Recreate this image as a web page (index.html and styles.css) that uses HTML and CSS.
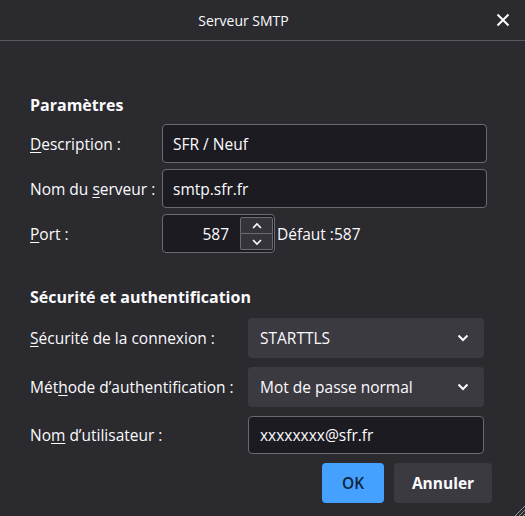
FILE: index.html
```html
<!DOCTYPE html>
<html lang="fr">
<head>
<meta charset="utf-8">
<title>Serveur SMTP</title>
<link rel="stylesheet" href="styles.css">
</head>
<body>
<div class="dialog">
  <header class="titlebar">
    <div class="title">Serveur SMTP</div>
    <button class="close" aria-label="Fermer">
      <svg width="14" height="14" viewBox="0 0 14 14"><path d="M1.5 1.5 L12.5 12.5 M12.5 1.5 L1.5 12.5" stroke="#fbfbfe" stroke-width="2" fill="none"/></svg>
    </button>
  </header>
  <main class="content">
    <h2 class="section-title first">Paramètres</h2>
    <div class="grid params">
      <label class="lbl"><u>D</u>escription :</label>
      <div class="field"><span class="val">SFR / Neuf</span></div>
      <label class="lbl">Nom du <u>s</u>erveur :</label>
      <div class="field"><span class="val">smtp.sfr.fr</span></div>
      <label class="lbl"><u>P</u>ort :</label>
      <div class="port-row">
        <div class="field port">
          <span class="val num">587</span>
          <div class="spinner">
            <div class="spin up"><svg width="12" height="8" viewBox="0 0 12 8"><path d="M2 6 L6 2 L10 6" stroke="#fbfbfe" stroke-width="1.6" fill="none"/></svg></div>
            <div class="spin down"><svg width="12" height="8" viewBox="0 0 12 8"><path d="M2 2 L6 6 L10 2" stroke="#fbfbfe" stroke-width="1.6" fill="none"/></svg></div>
          </div>
        </div>
        <span class="default">Défaut :587</span>
      </div>
    </div>

    <h2 class="section-title second">Sécurité et authentification</h2>
    <div class="grid auth">
      <label class="lbl"><u>S</u>écurité de la connexion :</label>
      <div class="select"><span class="val">STARTTLS</span><svg class="chev" width="12" height="8" viewBox="0 0 12 8"><path d="M1.5 1.5 L6 6 L10.5 1.5" stroke="#fbfbfe" stroke-width="2" fill="none"/></svg></div>
      <label class="lbl">Mét<u>h</u>ode d’authentification :</label>
      <div class="select sel2"><span class="val">Mot de passe normal</span><svg class="chev" width="12" height="8" viewBox="0 0 12 8"><path d="M1.5 1.5 L6 6 L10.5 1.5" stroke="#fbfbfe" stroke-width="2" fill="none"/></svg></div>
      <label class="lbl">No<u>m</u> d’utilisateur :</label>
      <div class="field user"><span class="val">xxxxxxxx@sfr.fr</span></div>
    </div>

    <div class="buttons">
      <button class="btn primary">OK</button>
      <button class="btn secondary">Annuler</button>
    </div>
  </main>
  <svg class="grip" width="12" height="12" viewBox="0 0 12 12"><path d="M12 2 L2 12 M12 6 L6 12 M12 10 L10 12" stroke="#9a99a0" stroke-width="1" fill="none"/></svg>
</div>
</body>
</html>
```
FILE: styles.css
```css
html, body {
  margin: 0;
  padding: 0;
}
body {
  width: 525px;
  height: 516px;
  overflow: hidden;
  background: #2a2a2f;
  color: #fbfbfe;
  font-family: "Open Sans", "Noto Sans", "DejaVu Sans", sans-serif;
  font-size: 15.5px;
}
.dialog {
  position: relative;
  width: 525px;
  height: 516px;
}
.titlebar {
  height: 40px;
  border-bottom: 1px solid #5a5960;
  display: grid;
  grid-template-columns: 1fr 32px;
  padding-right: 6px;
  align-items: center;
}
.title {
  text-align: center;
  font-size: 14px;
  font-weight: 500;
}
.close {
  background: none;
  border: 0;
  padding: 0;
  width: 32px;
  height: 32px;
  display: flex;
  align-items: center;
  justify-content: center;
}
.content {
  padding: 0 33px 0 30px;
}
.section-title {
  margin: 0;
  font-size: 16px;
  font-weight: 700;
  line-height: 20px;
}
.section-title.first { margin-top: 54px; }
.section-title.second { margin-top: 34px; }
.grid {
  display: grid;
  align-items: center;
}
.params {
  margin-top: 9px;
  grid-template-columns: 132px 325px;
  row-gap: 6px;
}
.auth {
  margin-top: 11px;
  grid-template-columns: 218px 236px;
  row-gap: 9px;
}
.lbl {
  white-space: nowrap;
}
.lbl u {
  text-underline-offset: 2px;
}
.field {
  box-sizing: border-box;
  height: 39px;
  border: 1px solid #6b6a72;
  border-radius: 4px;
  background: #1c1b22;
  display: flex;
  align-items: center;
  padding: 0 10px;
}
.port-row {
  display: flex;
  align-items: center;
  gap: 2px;
}
.field.port {
  width: 113px;
  padding: 0 1px 0 10px;
  justify-content: flex-end;
}
.num {
  margin-right: 11px;
}
.spinner {
  width: 33px;
  height: 33px;
  display: flex;
  flex-direction: column;
}
.spin {
  flex: 1;
  box-sizing: border-box;
  background: #35343b;
  border: 1px solid #6b6a72;
  display: flex;
  align-items: center;
  justify-content: center;
}
.spin.up { border-radius: 2px 2px 0 0; }
.spin.down { border-radius: 0 0 2px 2px; border-top: 0; }
.select {
  box-sizing: border-box;
  height: 40px;
  background: #3b3a41;
  border-radius: 4px;
  display: flex;
  align-items: center;
  justify-content: space-between;
  padding: 0 15px 0 12px;
}
.field.user {
  height: 38px;
  padding-left: 11px;
}
.buttons {
  margin-top: 9px;
  display: flex;
  justify-content: flex-end;
  gap: 10px;
}
.btn {
  height: 40px;
  border: 0;
  border-radius: 4px;
  font-family: inherit;
  font-size: 15.5px;
  font-weight: 600;
  padding: 0;
}
.primary {
  width: 62px;
  background: #45a1ff;
  color: #10243a;
}
.secondary {
  width: 98px;
  background: #3b3a41;
  color: #fbfbfe;
  font-weight: 700;
}
.grip {
  position: absolute;
  right: 0;
  bottom: 0;
}
```
